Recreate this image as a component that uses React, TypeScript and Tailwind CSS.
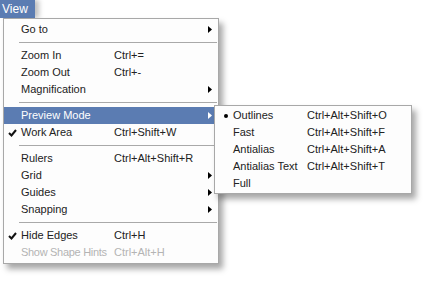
import React from 'react';

type Item =
  | { kind: 'sep' }
  | {
      kind: 'item';
      label: string;
      shortcut?: string;
      sub?: boolean;
      check?: boolean;
      active?: boolean;
      disabled?: boolean;
    };

const MAIN: Item[] = [
  { kind: 'item', label: 'Go to', sub: true },
  { kind: 'sep' },
  { kind: 'item', label: 'Zoom In', shortcut: 'Ctrl+=' },
  { kind: 'item', label: 'Zoom Out', shortcut: 'Ctrl+-' },
  { kind: 'item', label: 'Magnification', sub: true },
  { kind: 'sep' },
  { kind: 'item', label: 'Preview Mode', sub: true, active: true },
  { kind: 'item', label: 'Work Area', shortcut: 'Ctrl+Shift+W', check: true },
  { kind: 'sep' },
  { kind: 'item', label: 'Rulers', shortcut: 'Ctrl+Alt+Shift+R' },
  { kind: 'item', label: 'Grid', sub: true },
  { kind: 'item', label: 'Guides', sub: true },
  { kind: 'item', label: 'Snapping', sub: true },
  { kind: 'sep' },
  { kind: 'item', label: 'Hide Edges', shortcut: 'Ctrl+H', check: true },
  { kind: 'item', label: 'Show Shape Hints', shortcut: 'Ctrl+Alt+H', disabled: true },
];

const PREVIEW = [
  { label: 'Outlines', shortcut: 'Ctrl+Alt+Shift+O', bullet: true },
  { label: 'Fast', shortcut: 'Ctrl+Alt+Shift+F' },
  { label: 'Antialias', shortcut: 'Ctrl+Alt+Shift+A' },
  { label: 'Antialias Text', shortcut: 'Ctrl+Alt+Shift+T' },
  { label: 'Full' },
];

const Arrow = ({ white }: { white?: boolean }) => (
  <svg width="4" height="7" viewBox="0 0 4 7">
    <path d="M0 0 L4 3.5 L0 7 Z" fill={white ? '#ffffff' : '#000000'} />
  </svg>
);

const Check = () => (
  <svg width="9" height="8" viewBox="0 0 9 8">
    <path d="M1 4 L3.5 6.5 L8 1" stroke="#111" strokeWidth="2" fill="none" />
  </svg>
);

const PreviewMenu = () => (
  <div className="absolute left-[210px] top-[-2px] z-10 w-[198px] border border-[#a8a8a8] bg-[#fdfdfd] py-px shadow-[4px_5px_6px_rgba(0,0,0,0.35)]">
    {PREVIEW.map((p) => (
      <div key={p.label} className="grid h-[17px] grid-cols-[18px_74px_1fr] items-center text-[#222]">
        <span className="flex justify-center pl-[4px]">
          {p.bullet && <span className="h-[4px] w-[4px] rounded-full bg-black" />}
        </span>
        <span className="whitespace-nowrap">{p.label}</span>
        <span className="whitespace-nowrap">{p.shortcut}</span>
      </div>
    ))}
  </div>
);

export default function App() {
  return (
    <div className="h-[282px] w-[432px] bg-white text-[11px] font-['Liberation_Sans',Arial,sans-serif]">
      <div className="flex h-[18px] w-[35px] items-center bg-[#5b7cb2] pl-[2px] text-[12px] text-white shadow-[4px_0_5px_rgba(0,0,0,0.25)]">
        View
      </div>
      <div className="ml-[3px] w-[216px] border border-[#a8a8a8] bg-[#fdfdfd] pt-[2px] pb-[2px] shadow-[4px_5px_6px_rgba(0,0,0,0.35)]">
        {MAIN.map((it, i) => {
          if (it.kind === 'sep') {
            return (
              <div key={i} className="flex h-[9px] items-center pl-[15px] pr-px">
                <div className="h-px w-full bg-[#a9a9a9]" />
              </div>
            );
          }
          return (
            <div
              key={i}
              className={`relative grid h-[17px] grid-cols-[17px_93px_1fr_10px] items-center ${
                it.active ? 'bg-[#5b7cb2] text-white' : it.disabled ? 'text-[#b4b4b4]' : 'text-[#222]'
              }`}
            >
              <span className="flex justify-center pt-px">{it.check && <Check />}</span>
              <span className={`whitespace-nowrap ${it.disabled ? 'tracking-[-0.3px]' : ''}`}>{it.label}</span>
              <span className="whitespace-nowrap">{it.shortcut}</span>
              <span className="flex items-center">{it.sub && <Arrow white={it.active} />}</span>
              {it.active && <PreviewMenu />}
            </div>
          );
        })}
      </div>
    </div>
  );
}
